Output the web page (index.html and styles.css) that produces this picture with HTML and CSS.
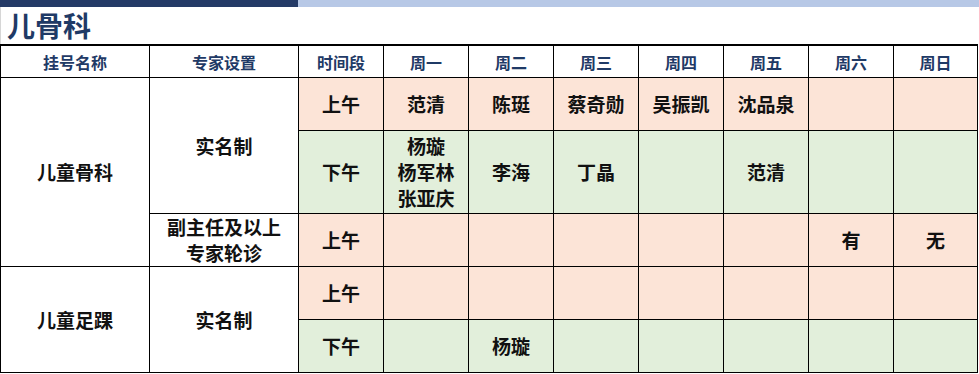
FILE: index.html
```html
<!DOCTYPE html>
<html lang="zh">
<head>
<meta charset="utf-8">
<link rel="stylesheet" href="styles.css">
</head>
<body>
<div class="bar"><div class="bar-dark"></div><div class="bar-light"></div></div>
<div class="page">
  <h1 class="title">儿骨科</h1>
  <table class="sched">
    <colgroup>
      <col class="c-wide"><col class="c-wide">
      <col class="c-day"><col class="c-day"><col class="c-day"><col class="c-day"><col class="c-day"><col class="c-day"><col class="c-day"><col class="c-last">
    </colgroup>
    <thead>
      <tr class="head">
        <th>挂号名称</th><th>专家设置</th><th>时间段</th>
        <th>周一</th><th>周二</th><th>周三</th><th>周四</th><th>周五</th><th>周六</th><th>周日</th>
      </tr>
    </thead>
    <tbody>
      <tr class="am r52">
        <td rowspan="3" class="plain">儿童骨科</td>
        <td rowspan="2" class="plain">实名制</td>
        <td>上午</td><td>范清</td><td>陈珽</td><td>蔡奇勋</td><td>吴振凯</td><td>沈品泉</td><td></td><td></td>
      </tr>
      <tr class="pm r82">
        <td>下午</td><td class="multi">杨璇<br>杨军林<br>张亚庆</td><td>李海</td><td>丁晶</td><td></td><td>范清</td><td></td><td></td>
      </tr>
      <tr class="am r52">
        <td class="plain multi">副主任及以上<br>专家轮诊</td>
        <td>上午</td><td></td><td></td><td></td><td></td><td></td><td>有</td><td>无</td>
      </tr>
      <tr class="am r52">
        <td rowspan="2" class="plain">儿童足踝</td>
        <td rowspan="2" class="plain">实名制</td>
        <td>上午</td><td></td><td></td><td></td><td></td><td></td><td></td><td></td>
      </tr>
      <tr class="pm r52">
        <td>下午</td><td></td><td>杨璇</td><td></td><td></td><td></td><td></td><td></td>
      </tr>
    </tbody>
  </table>
</div>
</body>
</html>
```
FILE: styles.css
```css
html, body {
  margin: 0;
  padding: 0;
  background: #ffffff;
}
body {
  font-family: "Noto Sans CJK SC", "Noto Sans", sans-serif;
  color: #111;
  width: 979px;
  overflow: hidden;
}
.bar {
  display: flex;
  height: 7px;
}
.bar-dark {
  width: 298px;
  background: #243a66;
}
.bar-light {
  flex: 1;
  background: #b7c8e6;
}
.page {
  border-left: 1px solid #d6d6d6;
}
.title {
  margin: 0;
  height: 37px;
  line-height: 36px;
  padding-left: 6px;
  font-size: 28px;
  font-weight: 700;
  color: #1f3a66;
}
.sched {
  border-collapse: collapse;
  table-layout: fixed;
  width: 977px;
  margin-left: -1px;
  border-top: 2px solid #000;
}
.c-wide { width: 149px; }
.c-day { width: 85px; }
.c-last { width: 84px; }
.sched th, .sched td {
  border: 1px solid #000;
  padding: 0;
  text-align: center;
  vertical-align: middle;
  font-weight: 700;
  font-size: 19px;
  line-height: 26px;
}
.sched tr:first-child th { border-top: 2px solid #000; }
.head th {
  height: 31px;
  font-size: 16px;
  color: #1f3a66;
  background: #fff;
}
.r52 td { height: 52px; }
.r82 td { height: 82px; }
.am td { background: #fce4d7; }
.pm td { background: #e2efdb; }
.sched td.plain { background: #fff; }
.multi { line-height: 26px; }
```
